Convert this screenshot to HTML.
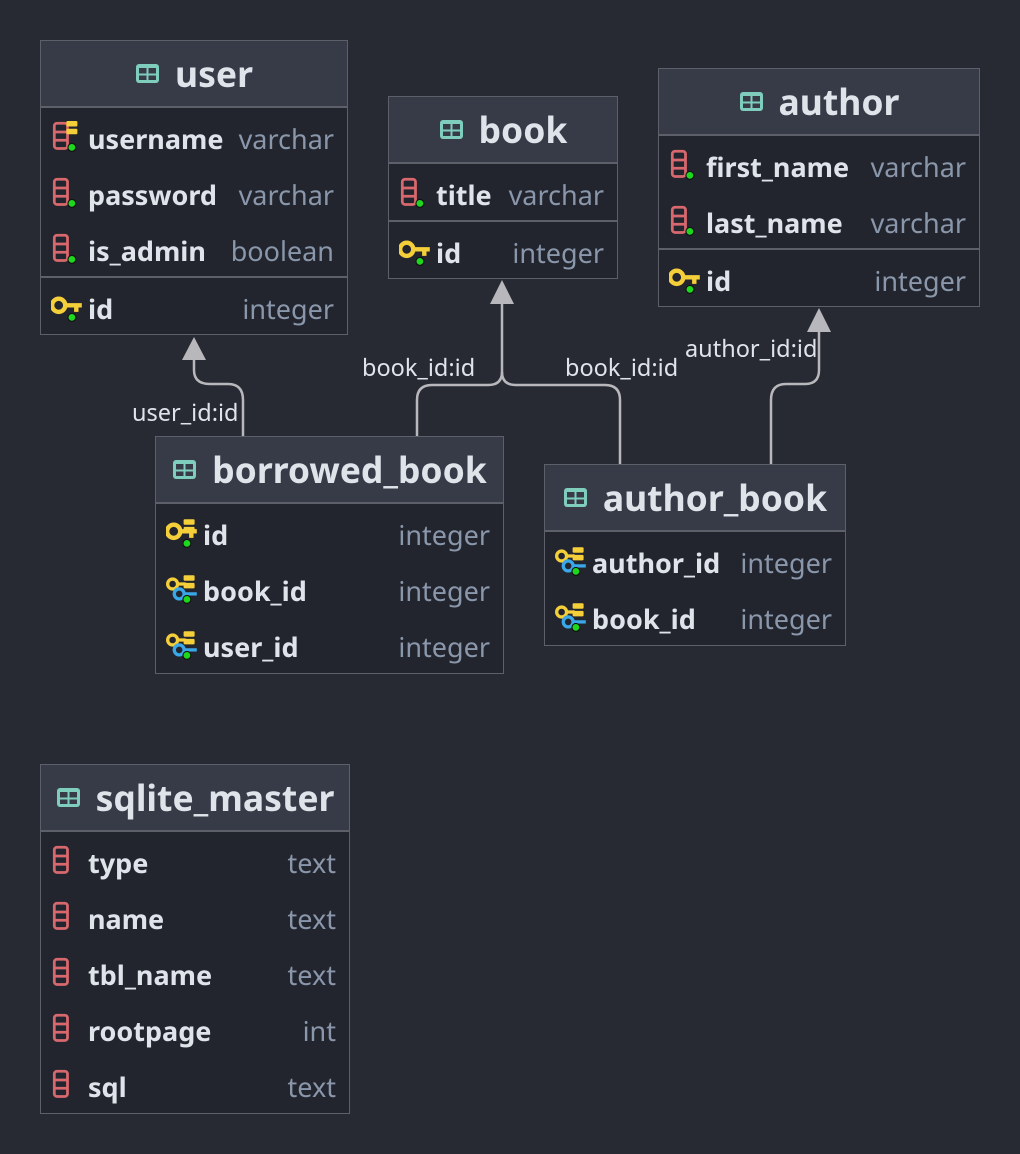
<!DOCTYPE html>
<html><head><meta charset="utf-8">
<style>
body{margin:0;width:1020px;height:1154px;background:#272a33;font-family:"Noto Sans","Liberation Sans",sans-serif;overflow:hidden;position:relative}
.t{position:absolute;background:#22252d;border:1px solid #5d6069;box-sizing:border-box}
.h{height:67px;background:#373b47;border-bottom:2px solid #5d6069;display:flex;align-items:center;justify-content:center;color:#dfe3ea;font-weight:bold;font-size:35.5px;box-sizing:border-box}
.h svg{margin-right:15px}
.r{height:56px;position:relative;color:#dfe3ea;font-size:27px;font-weight:bold}
.r .n{position:absolute;left:47px;top:12px}
.r .y{position:absolute;right:13px;top:12px;font-weight:normal;color:#8a97ab}
.r svg{position:absolute;left:10px;top:13px}
.g{border-top:2px solid #5d6069}
.l{position:absolute;color:#dfe3ea;font-size:23.5px}
</style></head><body>
<svg width="1020" height="1154" style="position:absolute;left:0;top:0" fill="none" stroke="#b8b8bc" stroke-width="2.5">
<path d="M194 355 V370 Q194 384 210 384 H228 Q243 384 243 400 V436"/>
<path d="M502 300 V372 Q502 385 488 385 H432 Q417 385 417 400 V436"/>
<path d="M502 372 Q502 385 516 385 H605 Q620 385 620 400 V464"/>
<path d="M819 328 V370 Q819 384 805 384 H786 Q771 384 771 400 V464"/>
<g fill="#b8b8bc" stroke="none">
<path d="M194 337 L182 360 H206Z"/><path d="M502 280 L490 304 H514Z"/><path d="M819 308 L807 332 H831Z"/>
</g></svg>
<div class="l" style="left:132px;top:396px">user_id:id</div>
<div class="l" style="left:362px;top:351px">book_id:id</div>
<div class="l" style="left:565px;top:351px">book_id:id</div>
<div class="l" style="left:685px;top:332px">author_id:id</div>

<svg width="0" height="0" style="position:absolute">
<defs>
<g id="tb"><rect x="1" y="1" width="23" height="19" rx="3" fill="#7fcdbd"/><rect x="4" y="5" width="7.5" height="5.5" fill="#373b47"/><rect x="13.5" y="5" width="7.5" height="5.5" fill="#373b47"/><rect x="4" y="12.5" width="7.5" height="4.5" fill="#373b47"/><rect x="13.5" y="12.5" width="7.5" height="4.5" fill="#373b47"/></g>
<g id="col"><rect x="3" y="2" width="12" height="23" rx="2.5" fill="none" stroke="#d9686e" stroke-width="2.5"/><line x1="3" y1="10" x2="15" y2="10" stroke="#d9686e" stroke-width="2.5"/><line x1="3" y1="17.5" x2="15" y2="17.5" stroke="#d9686e" stroke-width="2.5"/></g>
<g id="dot"><circle cx="19" cy="24" r="3.6" fill="#1ed81e" stroke="#111" stroke-width="1"/></g>
<g id="key"><circle cx="7" cy="13" r="6" fill="none" stroke="#f5cf3a" stroke-width="4"/><path d="M12 11 H28 V15 H25 V19 H21 V15 H12Z" fill="#f5cf3a"/></g>
<g id="stk"><rect x="18" y="2" width="10" height="5" rx="1" fill="#f5cf3a"/><rect x="18" y="9" width="10" height="5" rx="1" fill="#f5cf3a"/></g>
<g id="fk"><circle cx="6" cy="10" r="4.5" fill="none" stroke="#f5cf3a" stroke-width="3"/><path d="M10 8.5 H18 V11.5 H10Z" fill="#f5cf3a"/><circle cx="12" cy="19" r="4.5" fill="none" stroke="#3aa8e8" stroke-width="3"/><path d="M16 17.5 H28 V20.5 H16Z" fill="#3aa8e8"/></g>
<g id="i-colnn"><g transform="scale(1.1)"><use href="#col"/><use href="#dot"/></g></g>
<g id="i-col"><g transform="scale(1.1)"><use href="#col"/></g></g>
<g id="i-uq"><g transform="scale(1.1)"><use href="#col"/><use href="#stk" transform="translate(-4,-2)"/><use href="#dot"/></g></g>
<g id="i-pk"><g transform="scale(1.1)"><use href="#key"/><use href="#dot"/></g></g>
<g id="i-pkfk"><g transform="scale(1.1)"><use href="#key"/><use href="#stk" transform="translate(-2,0)"/><use href="#dot"/></g></g>
<g id="i-fk"><g transform="scale(1.1)"><use href="#fk"/><use href="#stk" transform="translate(-2,0)"/><use href="#dot"/></g></g>
</defs></svg>

<!-- user -->
<div class="t" style="left:40px;top:40px;width:308px">
<div class="h"><svg width="25" height="21"><use href="#tb"/></svg>user</div>
<div class="r"><svg width="34" height="34"><use href="#i-uq"/></svg><span class="n">username</span><span class="y">varchar</span></div>
<div class="r"><svg width="34" height="34"><use href="#i-colnn"/></svg><span class="n">password</span><span class="y">varchar</span></div>
<div class="r"><svg width="34" height="34"><use href="#i-colnn"/></svg><span class="n">is_admin</span><span class="y">boolean</span></div>
<div class="g"><div class="r"><svg width="34" height="34"><use href="#i-pk"/></svg><span class="n">id</span><span class="y">integer</span></div></div>
</div>

<!-- book -->
<div class="t" style="left:388px;top:96px;width:230px">
<div class="h"><svg width="25" height="21"><use href="#tb"/></svg>book</div>
<div class="r"><svg width="34" height="34"><use href="#i-colnn"/></svg><span class="n">title</span><span class="y">varchar</span></div>
<div class="g"><div class="r"><svg width="34" height="34"><use href="#i-pk"/></svg><span class="n">id</span><span class="y">integer</span></div></div>
</div>

<!-- author -->
<div class="t" style="left:658px;top:68px;width:322px">
<div class="h"><svg width="25" height="21"><use href="#tb"/></svg>author</div>
<div class="r"><svg width="34" height="34"><use href="#i-colnn"/></svg><span class="n">first_name</span><span class="y">varchar</span></div>
<div class="r"><svg width="34" height="34"><use href="#i-colnn"/></svg><span class="n">last_name</span><span class="y">varchar</span></div>
<div class="g"><div class="r"><svg width="34" height="34"><use href="#i-pk"/></svg><span class="n">id</span><span class="y">integer</span></div></div>
</div>

<!-- borrowed_book -->
<div class="t" style="left:155px;top:436px;width:349px;height:238px">
<div class="h"><svg width="25" height="21"><use href="#tb"/></svg>borrowed_book</div>
<div class="r"><svg width="34" height="34"><use href="#i-pkfk"/></svg><span class="n">id</span><span class="y">integer</span></div>
<div class="r"><svg width="34" height="34"><use href="#i-fk"/></svg><span class="n">book_id</span><span class="y">integer</span></div>
<div class="r"><svg width="34" height="34"><use href="#i-fk"/></svg><span class="n">user_id</span><span class="y">integer</span></div>
</div>

<!-- author_book -->
<div class="t" style="left:544px;top:464px;width:302px;height:182px">
<div class="h"><svg width="25" height="21"><use href="#tb"/></svg>author_book</div>
<div class="r"><svg width="34" height="34"><use href="#i-fk"/></svg><span class="n">author_id</span><span class="y">integer</span></div>
<div class="r"><svg width="34" height="34"><use href="#i-fk"/></svg><span class="n">book_id</span><span class="y">integer</span></div>
</div>

<!-- sqlite_master -->
<div class="t" style="left:40px;top:764px;width:310px;height:350px">
<div class="h"><svg width="25" height="21"><use href="#tb"/></svg>sqlite_master</div>
<div class="r"><svg width="34" height="34"><use href="#i-col"/></svg><span class="n">type</span><span class="y">text</span></div>
<div class="r"><svg width="34" height="34"><use href="#i-col"/></svg><span class="n">name</span><span class="y">text</span></div>
<div class="r"><svg width="34" height="34"><use href="#i-col"/></svg><span class="n">tbl_name</span><span class="y">text</span></div>
<div class="r"><svg width="34" height="34"><use href="#i-col"/></svg><span class="n">rootpage</span><span class="y">int</span></div>
<div class="r"><svg width="34" height="34"><use href="#i-col"/></svg><span class="n">sql</span><span class="y">text</span></div>
</div>
</body></html>
